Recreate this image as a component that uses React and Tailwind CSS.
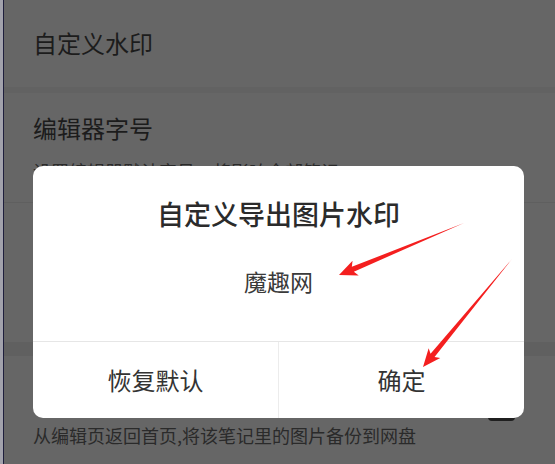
import React from "react";

const font = { fontFamily: '"Noto Sans CJK SC", "Noto Sans", sans-serif' };

function arrowPoints(tx, ty, px, py, headLen, headHalf, shaftHalf) {
  const dx = px - tx;
  const dy = py - ty;
  const len = Math.hypot(dx, dy);
  const ux = dx / len;
  const uy = dy / len;
  const nx = -uy;
  const ny = ux;
  const bx = px - ux * headLen;
  const by = py - uy * headLen;
  const wx = bx - ux * 3;
  const wy = by - uy * 3;
  const pts = [
    [tx, ty],
    [bx + nx * shaftHalf, by + ny * shaftHalf],
    [wx + nx * headHalf, wy + ny * headHalf],
    [px, py],
    [wx - nx * headHalf, wy - ny * headHalf],
    [bx - nx * shaftHalf, by - ny * shaftHalf],
  ];
  return pts.map((p) => p.join(",")).join(" ");
}

function Arrows() {
  return (
    <svg className="absolute inset-0 pointer-events-none" width="555" height="464">
      <polygon points={arrowPoints(464, 223, 339, 275, 15, 8, 2.6)} fill="#f41f1f" />
      <polygon points={arrowPoints(512, 259, 423, 367, 15, 7.5, 2.6)} fill="#f41f1f" />
    </svg>
  );
}

function WatermarkDialog() {
  return (
    <div className="absolute left-[33px] top-[166px] w-[491px] h-[252px] bg-white rounded-[10px] flex flex-col" style={font}>
      <div className="pt-[30px] text-center text-[27px] leading-[36px] font-medium text-[#2b2b2b]">
        自定义导出图片水印
      </div>
      <div className="mt-[33px] text-center text-[23px] leading-[32px] text-[#3a3a3a]">魔趣网</div>
      <div className="flex-1" />
      <div className="h-[77px] border-t border-[#e6e6e6] flex">
        <button className="flex-1 text-[24px] text-[#333] border-r border-[#ececec]">恢复默认</button>
        <button className="flex-1 text-[24px] text-[#333]">确定</button>
      </div>
    </div>
  );
}

export default function App() {
  return (
    <div className="relative w-[555px] h-[464px] overflow-hidden bg-[#666666] flex" style={font}>
      <div className="w-[3px] bg-[#a2a2ac]" />
      <div className="w-[1px] bg-[#1e1e3c]" />

      <div className="flex-1 flex flex-col">
        {/* settings list under the overlay */}
        <div className="h-[87px] pl-[29px] flex items-center">
          <span className="text-[24px] text-[#1c1c1c] -mt-[2px]">自定义水印</span>
        </div>
        <div className="h-[6px] bg-[#626262]" />
        <div className="h-[110px] pl-[29px] pt-[18px] border-b border-[#5f5f5f]">
          <div className="text-[24px] leading-[34px] text-[#1c1c1c]">编辑器字号</div>
          <div className="mt-[13px] text-[18px] leading-[26px] text-[#2a2a2a]">设置编辑器默认字号，将影响全部笔记</div>
        </div>
        <div className="h-[139px]" />
        <div className="h-[14px] bg-[#606060]" />
        <div className="pl-[29px] pr-[40px] pt-[36px] flex flex-col">
          <div className="h-[30px] flex items-center justify-end">
            <span className="w-[27px] h-[27px] rounded-[4px] border-[3px] border-[#1f1f1f]" />
          </div>
          <div className="text-[18px] leading-[26px] text-[#2a2a2a]">从编辑页返回首页,将该笔记里的图片备份到网盘</div>
        </div>
      </div>

      <WatermarkDialog />
      <Arrows />
    </div>
  );
}
